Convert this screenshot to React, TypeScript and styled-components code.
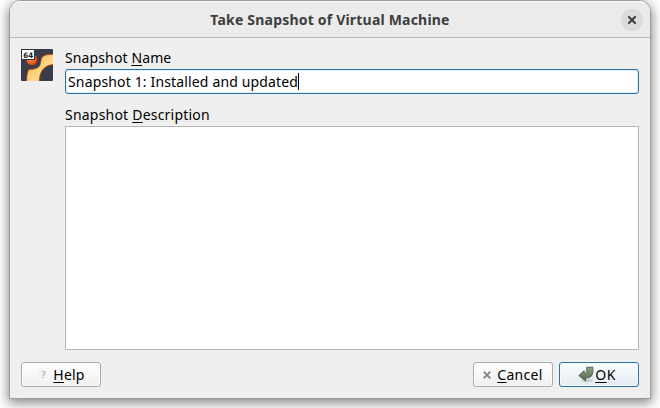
import React from "react";
import styled, { createGlobalStyle } from "styled-components";

const GlobalStyle = createGlobalStyle`
  html, body { margin: 0; padding: 0; }
  body { background: #fff; overflow: hidden; }
  * { box-sizing: border-box; }
`;

const Desktop = styled.div`
  width: 660px;
  height: 408px;
  padding: 0 9px 9px;
  overflow: hidden;
  background: #fff;
  font-family: "Noto Sans", "Open Sans", sans-serif;
  font-size: 14px;
  color: #000;
`;

const Dialog = styled.main`
  display: flex;
  flex-direction: column;
  width: 642px;
  height: 399px;
  border: 1px solid #999;
  border-radius: 12px 12px 0 0;
  background: #efefef;
  box-shadow: 0 3px 12px 1px rgba(0, 0, 0, 0.48);
`;

const TitleBar = styled.header`
  display: grid;
  grid-template-columns: 1fr auto 1fr;
  align-items: center;
  height: 37px;
  flex: none;
  padding-right: 7px;
  border-top: 1px solid #fff;
  border-bottom: 1px solid #b9b9b9;
  border-radius: 11px 11px 0 0;
  background: #ebebeb;
`;

const Title = styled.h1<{ $spacing: number }>`
  grid-column: 2;
  margin: 0 0 0 7px;
  font-size: 14px;
  line-height: 20px;
  font-weight: 700;
  letter-spacing: ${(p) => p.$spacing}px;
  color: #3d3d3d;
  white-space: nowrap;
`;

const CloseButton = styled.button`
  justify-self: end;
  display: grid;
  place-items: center;
  width: 22px;
  height: 22px;
  padding: 0;
  border: 0;
  border-radius: 50%;
  background: #dadada;
`;

const Content = styled.div`
  display: grid;
  grid-template-columns: 32px 574px;
  column-gap: 12px;
  padding: 11px 11px 0;
`;

const Fields = styled.div`
  display: flex;
  flex-direction: column;
`;

const Text = styled.span<{ $spacing: number }>`
  letter-spacing: ${(p) => p.$spacing}px;
  line-height: 20px;
  white-space: nowrap;
`;

const Label = styled(Text).attrs({ as: "label" })`
  height: 20px;
  line-height: 18px;
`;

const Mnemonic = styled.span`
  text-decoration: underline;
  text-decoration-thickness: 1px;
  text-underline-offset: 2px;
  text-decoration-skip-ink: none;
`;

const NameField = styled.div`
  display: flex;
  align-items: center;
  height: 25px;
  padding: 0 2px;
  border: 1px solid #2a74a3;
  border-radius: 3px;
  background: #fff;
  box-shadow: inset 0 0 0 1px #e1edf4;
  margin-bottom: 12px;
`;

const Caret = styled.span`
  width: 1px;
  height: 17px;
  background: #000;
`;

const Description = styled.div`
  height: 224px;
  border: 1px solid #b7b7b7;
  background: #fff;
`;

const Footer = styled.footer`
  display: flex;
  gap: 6px;
  padding: 12px 11px 0;
`;

const Button = styled.button<{ $primary?: boolean; $push?: boolean; $gap: number }>`
  display: flex;
  align-items: center;
  justify-content: center;
  gap: ${(p) => p.$gap}px;
  width: 80px;
  height: 25px;
  padding: 0 ${(p) => (p.$primary ? 4 : 0)}px 0 0;
  margin-left: ${(p) => (p.$push ? "auto" : "0")};
  font: inherit;
  color: #000;
  border: 1px solid ${(p) => (p.$primary ? "#2a74a3" : "#acacac")};
  border-radius: 3px;
  background: ${(p) =>
    p.$primary ? "linear-gradient(#fbfdff, #e5ebf0)" : "linear-gradient(#fff, #efefef)"};
  box-shadow: inset 0 0 0 1px ${(p) => (p.$primary ? "#f3f9fc" : "#fbfbfb")};
`;

const HelpMark = styled.span`
  display: grid;
  place-items: center;
  width: 12px;
  height: 13px;
  background: #f4f4f4;
  color: #909090;
  font-size: 9px;
  line-height: 13px;
`;

const Icon = styled.svg`
  display: block;
  flex: none;
`;

const SystemIcon = () => (
  <Icon width="32" height="32" viewBox="0 0 32 32">
    <defs>
      <radialGradient id="ball" cx="0.42" cy="0.45" r="0.65">
        <stop offset="0" stopColor="#ff9a48" />
        <stop offset="0.55" stopColor="#f0601c" />
        <stop offset="1" stopColor="#a82c08" />
      </radialGradient>
      <linearGradient id="ribbon" x1="0" y1="0" x2="1" y2="1">
        <stop offset="0" stopColor="#ffab40" />
        <stop offset="0.45" stopColor="#ffcf78" />
        <stop offset="0.6" stopColor="#ffd98c" />
        <stop offset="1" stopColor="#f59c30" />
      </linearGradient>
      <clipPath id="tile"><rect width="32" height="32" rx="1" /></clipPath>
    </defs>
    <g clipPath="url(#tile)">
      <rect width="32" height="32" fill="#383d49" />
      <circle cx="11" cy="10.7" r="5.6" fill="url(#ball)" />
      <path
        d="M5.7 33C5.5 29 6 24 7.5 20.8C11 20 15 20.3 17.5 18C20.5 15.5 19 10.5 21.5 7.8C23.5 5.6 28 5.5 33 5.3V15.8C28.5 15.5 25.5 17 23 19.5C19.5 22.5 18.7 26.5 18.3 33Z"
        fill="url(#ribbon)"
        stroke="#b0440c"
        strokeWidth="0.9"
      />
    </g>
    <rect x="0.5" y="0.5" width="13" height="10" fill="#fff" stroke="#303440" />
    <text x="2.2" y="8.5" fontFamily="DejaVu Sans" fontWeight="700" fontSize="7.5" textLength="10" lengthAdjust="spacingAndGlyphs" fill="#151a25">64</text>
  </Icon>
);

const ReturnIcon = () => (
  <Icon width="16" height="17" viewBox="0 0 16 17">
    <defs>
      <linearGradient id="arrow" x1="0" y1="0" x2="0" y2="1">
        <stop offset="0" stopColor="#92a285" />
        <stop offset="1" stopColor="#52664b" />
      </linearGradient>
    </defs>
    <ellipse cx="9" cy="14.5" rx="6" ry="1.8" fill="#000" opacity="0.12" />
    <path
      d="M8.8 1.2H14.8V6.5Q14.3 11 10.5 11.8H7.7V15L0.8 9.6L6.2 4.6V6.9H7.8Q9.2 6.7 8.8 4.2Z"
      fill="url(#arrow)"
      stroke="#4b5846"
      strokeWidth="0.9"
    />
  </Icon>
);

export default function App() {
  return (
    <>
      <GlobalStyle />
      <Desktop>
        <Dialog>
          <TitleBar>
            <Title $spacing={0.2}>Take Snapshot of Virtual Machine</Title>
            <CloseButton aria-label="Close">
              <Icon width="8" height="8" viewBox="0 0 8 8">
                <path d="M1 1L7 7M7 1L1 7" stroke="#3d3d3d" strokeWidth="2" strokeLinecap="square" />
              </Icon>
            </CloseButton>
          </TitleBar>
          <Content>
            <SystemIcon />
            <Fields>
              <Label $spacing={0.12}>Snapshot <Mnemonic>N</Mnemonic>ame</Label>
              <NameField>
                <Text $spacing={0.15}>Snapshot 1: Installed and updated</Text>
                <Caret />
              </NameField>
              <Label $spacing={0.21}>Snapshot <Mnemonic>D</Mnemonic>escription</Label>
              <Description />
            </Fields>
          </Content>
          <Footer>
            <Button $gap={4}>
              <HelpMark>?</HelpMark>
              <Text $spacing={0.2}><Mnemonic>H</Mnemonic>elp</Text>
            </Button>
            <Button $push $gap={6}>
              <Icon width="8" height="8" viewBox="0 0 8 8">
                <path d="M0.7 0.7L7.3 7.3M7.3 0.7L0.7 7.3" stroke="#828282" strokeWidth="1.8" />
              </Icon>
              <Text $spacing={0.3}><Mnemonic>C</Mnemonic>ancel</Text>
            </Button>
            <Button $primary $gap={1}>
              <ReturnIcon />
              <Text $spacing={0.5}><Mnemonic>O</Mnemonic>K</Text>
            </Button>
          </Footer>
        </Dialog>
      </Desktop>
    </>
  );
}
